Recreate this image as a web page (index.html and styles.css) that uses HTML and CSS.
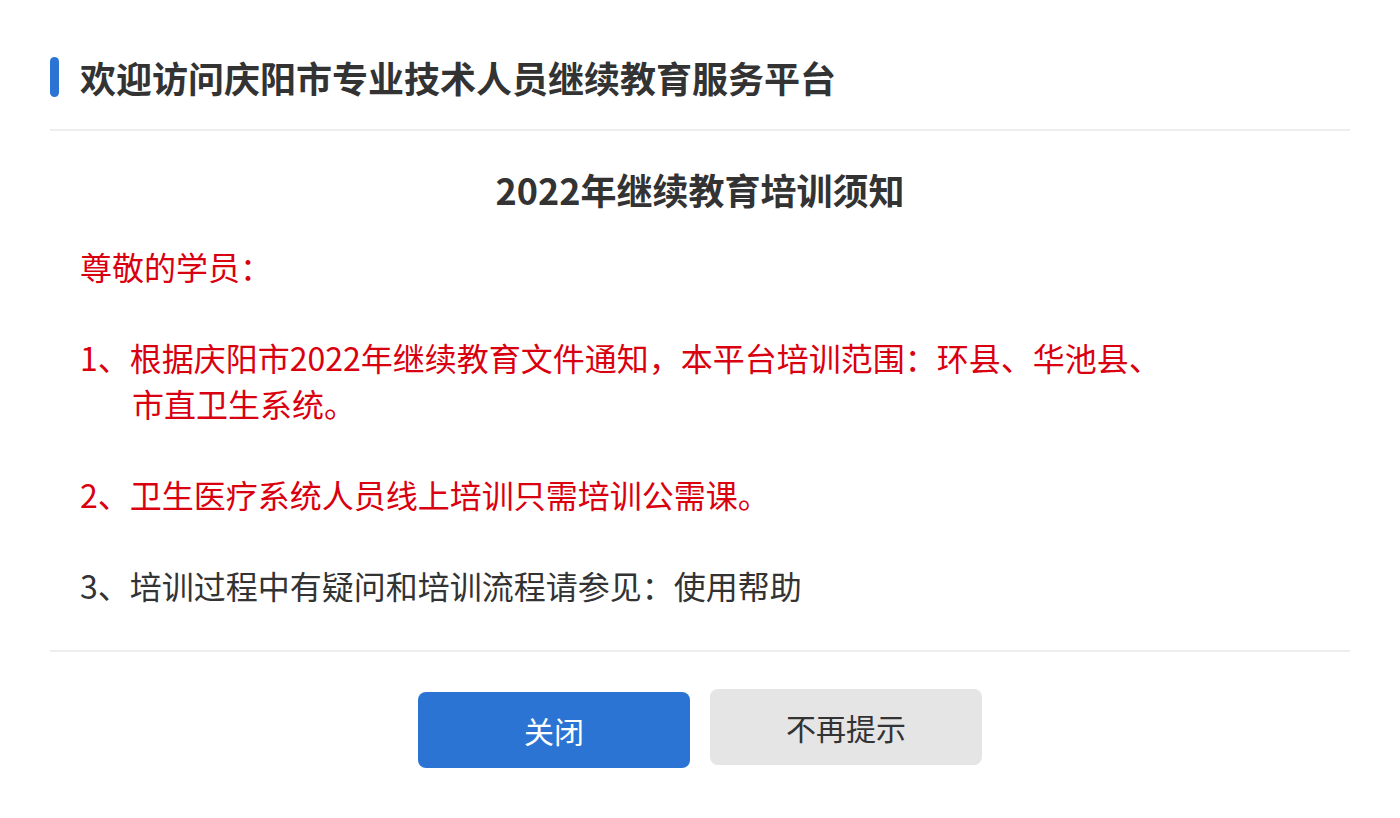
FILE: index.html
```html
<!DOCTYPE html>
<html lang="zh-CN">
<head>
    <meta charset="UTF-8">
    <meta name="viewport" content="width=device-width, initial-scale=1.0">
    <title>继续教育培训须知</title>
    <link rel="stylesheet" href="styles.css">
</head>
<body>

    <div class="dialog">
        <header class="dialog-header">
            <span class="bar"></span>
            <h1>欢迎访问庆阳市专业技术人员继续教育服务平台</h1>
        </header>

        <div class="dialog-body">
            <h2>2022年继续教育培训须知</h2>
            <p class="red">尊敬的学员：</p>
            <p class="red item">1、根据庆阳市2022年继续教育文件通知，本平台培训范围：环县、华池县、市直卫生系统。</p>
            <p class="red item">2、卫生医疗系统人员线上培训只需培训公需课。</p>
            <p class="item">3、培训过程中有疑问和培训流程请参见：使用帮助</p>
        </div>

        <div class="dialog-footer">
            <button class="btn btn-primary" type="button">关闭</button>
            <button class="btn btn-default" type="button">不再提示</button>
        </div>
    </div>

</body>
</html>
```

FILE: styles.css
```css
body {
    margin: 0;
    padding: 0;
    background-color: #fff;
    font-family: "Noto Sans CJK SC", "Noto Sans", sans-serif;
    color: #333;
}
.dialog {
    padding: 55px 50px 0;
}
.dialog-header {
    display: flex;
    align-items: center;
    padding-bottom: 30px;
    border-bottom: 2px solid #eeeeee;
}
.bar {
    width: 9px;
    height: 40px;
    margin-right: 21px;
    border-radius: 5px;
    background-color: #2c74d3;
}
h1 {
    margin: 0;
    font-size: 36px;
    line-height: 44px;
    font-weight: bold;
    color: #333;
}
.dialog-body {
    padding: 28px 30px 42px;
    border-bottom: 2px solid #eeeeee;
}
h2 {
    margin: 0 0 24px;
    text-align: center;
    font-size: 36px;
    line-height: 60px;
    font-weight: bold;
    color: #333;
}
p {
    box-sizing: border-box;
    margin: 0 0 45px;
    width: 1096px;
    font-size: 32px;
    line-height: 46px;
}
p:last-child {
    margin-bottom: 0;
}
.item {
    padding-left: 52px;
    text-indent: -52px;
}
.red {
    color: #d9000f;
}
.dialog-footer {
    display: flex;
    justify-content: center;
    align-items: flex-start;
    gap: 20px;
    padding-top: 37px;
}
.btn {
    width: 272px;
    height: 76px;
    border: none;
    border-radius: 8px;
    font-family: inherit;
    font-size: 30px;
    cursor: pointer;
}
.btn-primary {
    margin-top: 3px;
    background-color: #2c74d3;
    color: #fff;
}
.btn-default {
    background-color: #e5e5e5;
    color: #333;
}
```
